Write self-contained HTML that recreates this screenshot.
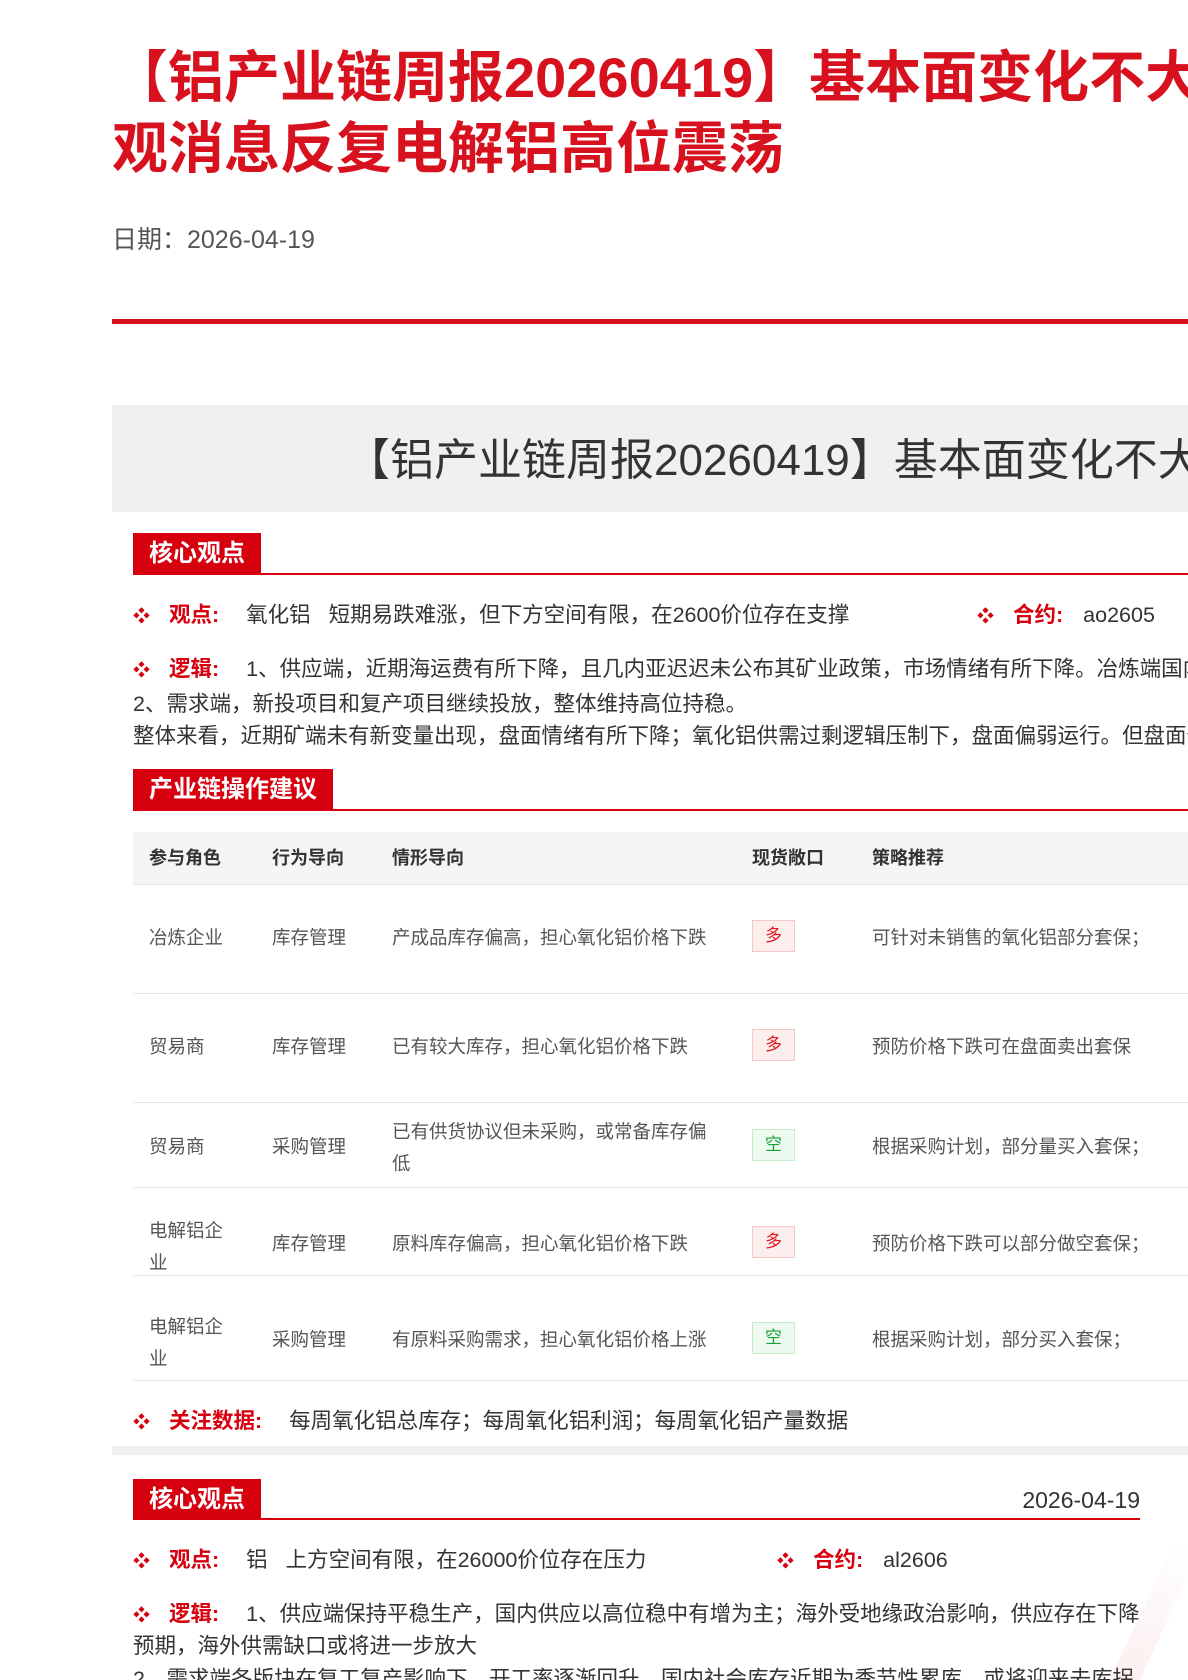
<!DOCTYPE html>
<html><head><meta charset="utf-8">
<style>
*{margin:0;padding:0;box-sizing:border-box}
html,body{width:1188px;height:1680px;overflow:hidden}
body{background:#fff;position:relative;font-family:"Liberation Sans","Noto Sans CJK SC",sans-serif;color:#333}
.wrap{position:absolute;left:0;top:0;width:1188px;height:1680px;overflow:hidden}
.a{position:absolute;white-space:nowrap}
.t{left:112px;font-size:56px;font-weight:bold;color:#d7111e;line-height:70px}
.hd{background:#d6000f;color:#fff;font-size:24px;font-weight:bold;height:41px;line-height:41px;padding:0 16px}
.ln{height:2px;background:#d6000f}
.b{font-size:21.5px;color:#333;line-height:32px}
.b .d{color:#d6000f;font-size:17px;margin-right:19px}
.b .k{color:#d6000f;font-weight:bold;margin-right:27px}
.tb{font-size:18.5px;color:#555;line-height:26px}
.th{font-size:18px;font-weight:bold;color:#333;line-height:26px}
.row{position:absolute;left:133px;width:1060px;border-bottom:1px solid #e6e9ee}
.tag{position:absolute;width:43px;height:32px;line-height:30px;text-align:center;font-size:17px;border:1px solid}
.r{color:#e3151f;background:#fdeeee;border-color:#f6c6c6}
.g{color:#1aa33a;background:#eef9ef;border-color:#c5ecc9}
</style></head><body><div class="wrap">
<div class="a t" style="top:43px">【铝产业链周报20260419】基本面变化不大，宏</div>
<div class="a t" style="top:114px">观消息反复电解铝高位震荡</div>
<div class="a" style="left:112px;top:225px;font-size:25px;line-height:30px;color:#555">日期：2026-04-19</div>
<div class="a" style="left:112px;top:319px;width:1076px;height:5px;background:#d7111e"></div>

<div class="a" style="left:112px;top:405px;width:1076px;height:107px;background:#f0f0f0"></div>
<div class="a" style="left:346px;top:434px;font-size:44px;color:#333;line-height:54px">【铝产业链周报20260419】基本面变化不大宏观</div>

<div class="a hd" style="left:133px;top:533px">核心观点</div>
<div class="a ln" style="left:133px;top:573px;width:1060px"></div>
<div class="a b" style="left:133px;top:599px"><span class="d">❖</span><span class="k">观点:</span>氧化铝&nbsp;&nbsp;&nbsp;短期易跌难涨，但下方空间有限，在2600价位存在支撑</div>
<div class="a b" style="left:977px;top:599px"><span class="d">❖</span><span class="k" style="margin-right:20px">合约:</span>ao2605</div>
<div class="a b" style="left:133px;top:653px"><span class="d">❖</span><span class="k">逻辑:</span>1、供应端，近期海运费有所下降，且几内亚迟迟未公布其矿业政策，市场情绪有所下降。冶炼端国内</div>
<div class="a b" style="left:133px;top:688px">2、需求端，新投项目和复产项目继续投放，整体维持高位持稳。</div>
<div class="a b" style="left:133px;top:720px">整体来看，近期矿端未有新变量出现，盘面情绪有所下降；氧化铝供需过剩逻辑压制下，盘面偏弱运行。但盘面价</div>

<div class="a hd" style="left:133px;top:769px">产业链操作建议</div>
<div class="a ln" style="left:133px;top:809px;width:1060px"></div>

<div class="row" style="top:832px;height:53px;background:#f4f5f7"></div>
<div class="a th" style="top:845px;left:149px">参与角色</div>
<div class="a th" style="top:845px;left:272px">行为导向</div>
<div class="a th" style="top:845px;left:392px">情形导向</div>
<div class="a th" style="top:845px;left:752px">现货敞口</div>
<div class="a th" style="top:845px;left:872px">策略推荐</div>

<div class="row" style="top:885px;height:109px"></div>
<div class="a tb" style="top:925px;left:149px">冶炼企业</div><div class="a tb" style="top:925px;left:272px">库存管理</div><div class="a tb" style="top:925px;left:392px">产成品库存偏高，担心氧化铝价格下跌</div><div class="tag r" style="top:920px;left:752px">多</div><div class="a tb" style="top:925px;left:872px">可针对未销售的氧化铝部分套保；</div>

<div class="row" style="top:994px;height:109px"></div>
<div class="a tb" style="top:1034px;left:149px">贸易商</div><div class="a tb" style="top:1034px;left:272px">库存管理</div><div class="a tb" style="top:1034px;left:392px">已有较大库存，担心氧化铝价格下跌</div><div class="tag r" style="top:1029px;left:752px">多</div><div class="a tb" style="top:1034px;left:872px">预防价格下跌可在盘面卖出套保</div>

<div class="row" style="top:1103px;height:85px"></div>
<div class="a tb" style="top:1134px;left:149px">贸易商</div><div class="a tb" style="top:1134px;left:272px">采购管理</div><div class="a tb" style="top:1116px;left:392px;line-height:32px">已有供货协议但未采购，或常备库存偏<br>低</div><div class="tag g" style="top:1129px;left:752px">空</div><div class="a tb" style="top:1134px;left:872px">根据采购计划，部分量买入套保；</div>

<div class="row" style="top:1188px;height:88px"></div>
<div class="a tb" style="top:1215px;left:149px;line-height:32px">电解铝企<br>业</div><div class="a tb" style="top:1231px;left:272px">库存管理</div><div class="a tb" style="top:1231px;left:392px">原料库存偏高，担心氧化铝价格下跌</div><div class="tag r" style="top:1226px;left:752px">多</div><div class="a tb" style="top:1231px;left:872px">预防价格下跌可以部分做空套保；</div>

<div class="row" style="top:1276px;height:105px"></div>
<div class="a tb" style="top:1311px;left:149px;line-height:32px">电解铝企<br>业</div><div class="a tb" style="top:1327px;left:272px">采购管理</div><div class="a tb" style="top:1327px;left:392px">有原料采购需求，担心氧化铝价格上涨</div><div class="tag g" style="top:1322px;left:752px">空</div><div class="a tb" style="top:1327px;left:872px">根据采购计划，部分买入套保；</div>

<div class="a b" style="left:133px;top:1405px"><span class="d">❖</span><span class="k">关注数据:</span>每周氧化铝总库存；每周氧化铝利润；每周氧化铝产量数据</div>

<div class="a" style="left:112px;top:1446px;width:1076px;height:9px;background:#f0f0f0"></div>
<div class="a" style="left:1140px;top:1550px;width:30px;height:130px;background:linear-gradient(200deg,transparent,#fbeeee);transform:skewX(-25deg)"></div>

<div class="a hd" style="left:133px;top:1479px">核心观点</div>
<div class="a ln" style="left:133px;top:1518px;width:1007px"></div>
<div class="a" style="right:48px;top:1486px;font-size:23px;line-height:28px;color:#333">2026-04-19</div>
<div class="a b" style="left:133px;top:1544px"><span class="d">❖</span><span class="k">观点:</span>铝&nbsp;&nbsp;&nbsp;上方空间有限，在26000价位存在压力</div>
<div class="a b" style="left:777px;top:1544px"><span class="d">❖</span><span class="k" style="margin-right:20px">合约:</span>al2606</div>
<div class="a b" style="left:133px;top:1598px"><span class="d">❖</span><span class="k">逻辑:</span>1、供应端保持平稳生产，国内供应以高位稳中有增为主；海外受地缘政治影响，供应存在下降</div>
<div class="a b" style="left:133px;top:1630px">预期，海外供需缺口或将进一步放大</div>
<div class="a b" style="left:133px;top:1663px">2、需求端各版块在复工复产影响下，开工率逐渐回升，国内社会库存近期为季节性累库，或将迎来去库拐</div>
</div></body></html>
